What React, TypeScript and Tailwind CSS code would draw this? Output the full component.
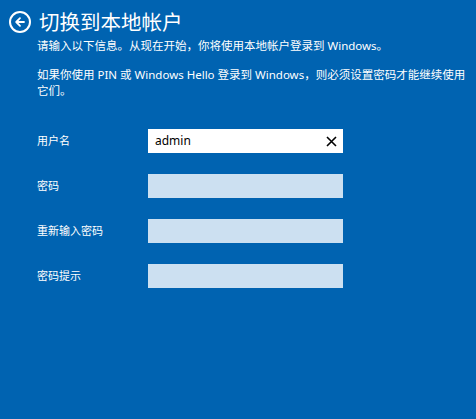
const font = { fontFamily: '"Noto Sans", "Noto Sans CJK SC", sans-serif' };

const fields = [
  { label: "用户名", value: "admin" },
  { label: "密码", value: "" },
  { label: "重新输入密码", value: "" },
  { label: "密码提示", value: "" },
];

const App = () => {
  return (
    <div
      className="h-screen w-full overflow-hidden bg-[#0063b1] text-white"
      style={font}
    >
      {/* header */}
      <div className="flex items-center gap-[8px] pl-[9px] pt-[11px]">
        <button className="flex h-[22px] w-[22px] items-center justify-center rounded-full border-[2px] border-white">
          <svg width="12" height="12" viewBox="0 0 12 12" fill="none">
            <path
              d="M10 6H2.5M6 2.2L2.2 6 6 9.8"
              stroke="white"
              strokeWidth="1.8"
              strokeLinecap="round"
              strokeLinejoin="round"
            />
          </svg>
        </button>
        <h1 className="text-[20.5px] leading-[22px] font-normal">切换到本地帐户</h1>
      </div>

      <div className="pl-[37px] pr-[6px] text-[11.5px] leading-[16px]">
        <p className="mt-[5px]">
          请输入以下信息。从现在开始，你将使用本地帐户登录到 Windows。
        </p>
        <p className="mt-[13px]">
          如果你使用 PIN 或 Windows Hello 登录到 Windows，则必须设置密码才能继续使用它们。
        </p>
      </div>

      <div className="mt-[30px] flex flex-col gap-[21px] pl-[37px]">
        {fields.map((f, i) => (
          <div key={f.label} className="flex items-center">
            <label className="w-[111px] text-[11px]">{f.label}</label>
            {i === 0 ? (
              <div className="flex h-[24px] w-[195px] items-center justify-between bg-white pl-[7px] pr-[6px]">
                <span className="text-[12px] text-black">{f.value}</span>
                <svg width="11" height="11" viewBox="0 0 11 11">
                  <path
                    d="M1 1L10 10M10 1L1 10"
                    stroke="black"
                    strokeWidth="1.6"
                  />
                </svg>
              </div>
            ) : (
              <div className="h-[24px] w-[195px] bg-[#cce0f1]" />
            )}
          </div>
        ))}
      </div>
    </div>
  );
};

export default App;
